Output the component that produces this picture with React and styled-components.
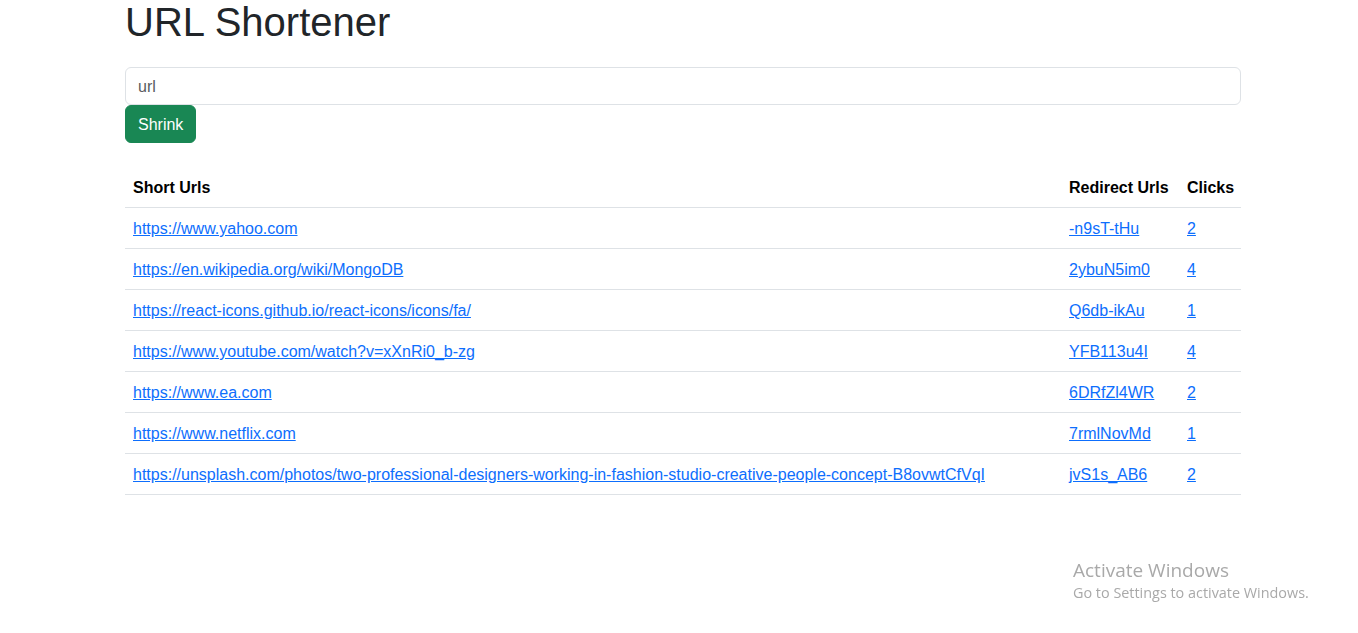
import React from "react";
import styled, { createGlobalStyle } from "styled-components";

const Global = createGlobalStyle`
  html, body { margin: 0; padding: 0; background: #fff; }
  body {
    font-family: "Liberation Sans", Arial, sans-serif;
    font-size: 16px;
    line-height: 1.5;
    color: #212529;
  }
  * { box-sizing: border-box; }
`;

const Container = styled.div`
  width: 1116px;
  margin-left: 125px;
`;

const Title = styled.h1`
  margin: -2px 0 21px;
  font-size: 40px;
  font-weight: 500;
  line-height: 1.2;
  color: #212529;
`;

const Form = styled.form`
  display: flex;
  flex-direction: column;
  align-items: flex-start;
`;

const Input = styled.input`
  display: block;
  width: 100%;
  height: 38px;
  padding: 7px 12px 5px;
  font: inherit;
  color: #212529;
  background: #fff;
  border: 1px solid #dee2e6;
  border-radius: 6px;
  outline: none;
  &::placeholder { color: #595c5f; opacity: 1; }
`;

const Button = styled.button`
  height: 38px;
  padding: 7px 12px 5px;
  font: inherit;
  color: #fff;
  background: #198754;
  border: 1px solid #198754;
  border-radius: 6px;
  cursor: pointer;
`;

const Table = styled.table`
  width: 100%;
  margin-top: 24px;
  border-collapse: collapse;
  table-layout: fixed;
`;

const Th = styled.th`
  width: ${(p) => p.$w || "auto"};
  padding: 9px 8px 7px;
  text-align: left;
  font-weight: 700;
  color: #000;
  border-bottom: 1px solid #dee2e6;
  white-space: nowrap;
`;

const Td = styled.td`
  padding: 9px 8px 7px;
  border-bottom: 1px solid #dee2e6;
  white-space: nowrap;
`;

const Link = styled.a`
  color: #0d6efd;
  text-decoration: underline;
`;

const Watermark = styled.div`
  position: fixed;
  left: 1073px;
  top: 557px;
  color: #a9a9a9;
  font-family: "Open Sans", "Noto Sans", sans-serif;
  pointer-events: none;
`;

const WmTitle = styled.div`
  font-size: 19px;
  line-height: 26px;
`;

const WmSub = styled.div`
  font-size: 14.4px;
  line-height: 20px;
`;

const rows = [
  ["https://www.yahoo.com", "-n9sT-tHu", 2],
  ["https://en.wikipedia.org/wiki/MongoDB", "2ybuN5im0", 4],
  ["https://react-icons.github.io/react-icons/icons/fa/", "Q6db-ikAu", 1],
  ["https://www.youtube.com/watch?v=xXnRi0_b-zg", "YFB113u4I", 4],
  ["https://www.ea.com", "6DRfZl4WR", 2],
  ["https://www.netflix.com", "7rmlNovMd", 1],
  [
    "https://unsplash.com/photos/two-professional-designers-working-in-fashion-studio-creative-people-concept-B8ovwtCfVqI",
    "jvS1s_AB6",
    2,
  ],
];

export default function App() {
  return (
    <>
      <Global />
      <Container>
        <Title>URL Shortener</Title>
        <Form onSubmit={(e) => e.preventDefault()}>
          <Input placeholder="url" />
          <Button type="submit">Shrink</Button>
        </Form>
        <Table>
          <thead>
            <tr>
              <Th>Short Urls</Th>
              <Th $w="118px">Redirect Urls</Th>
              <Th $w="62px">Clicks</Th>
            </tr>
          </thead>
          <tbody>
            {rows.map(([full, short, clicks]) => (
              <tr key={short}>
                <Td><Link href={full}>{full}</Link></Td>
                <Td><Link href={short}>{short}</Link></Td>
                <Td><Link href={short}>{clicks}</Link></Td>
              </tr>
            ))}
          </tbody>
        </Table>
      </Container>
      <Watermark>
        <WmTitle>Activate Windows</WmTitle>
        <WmSub>Go to Settings to activate Windows.</WmSub>
      </Watermark>
    </>
  );
}
